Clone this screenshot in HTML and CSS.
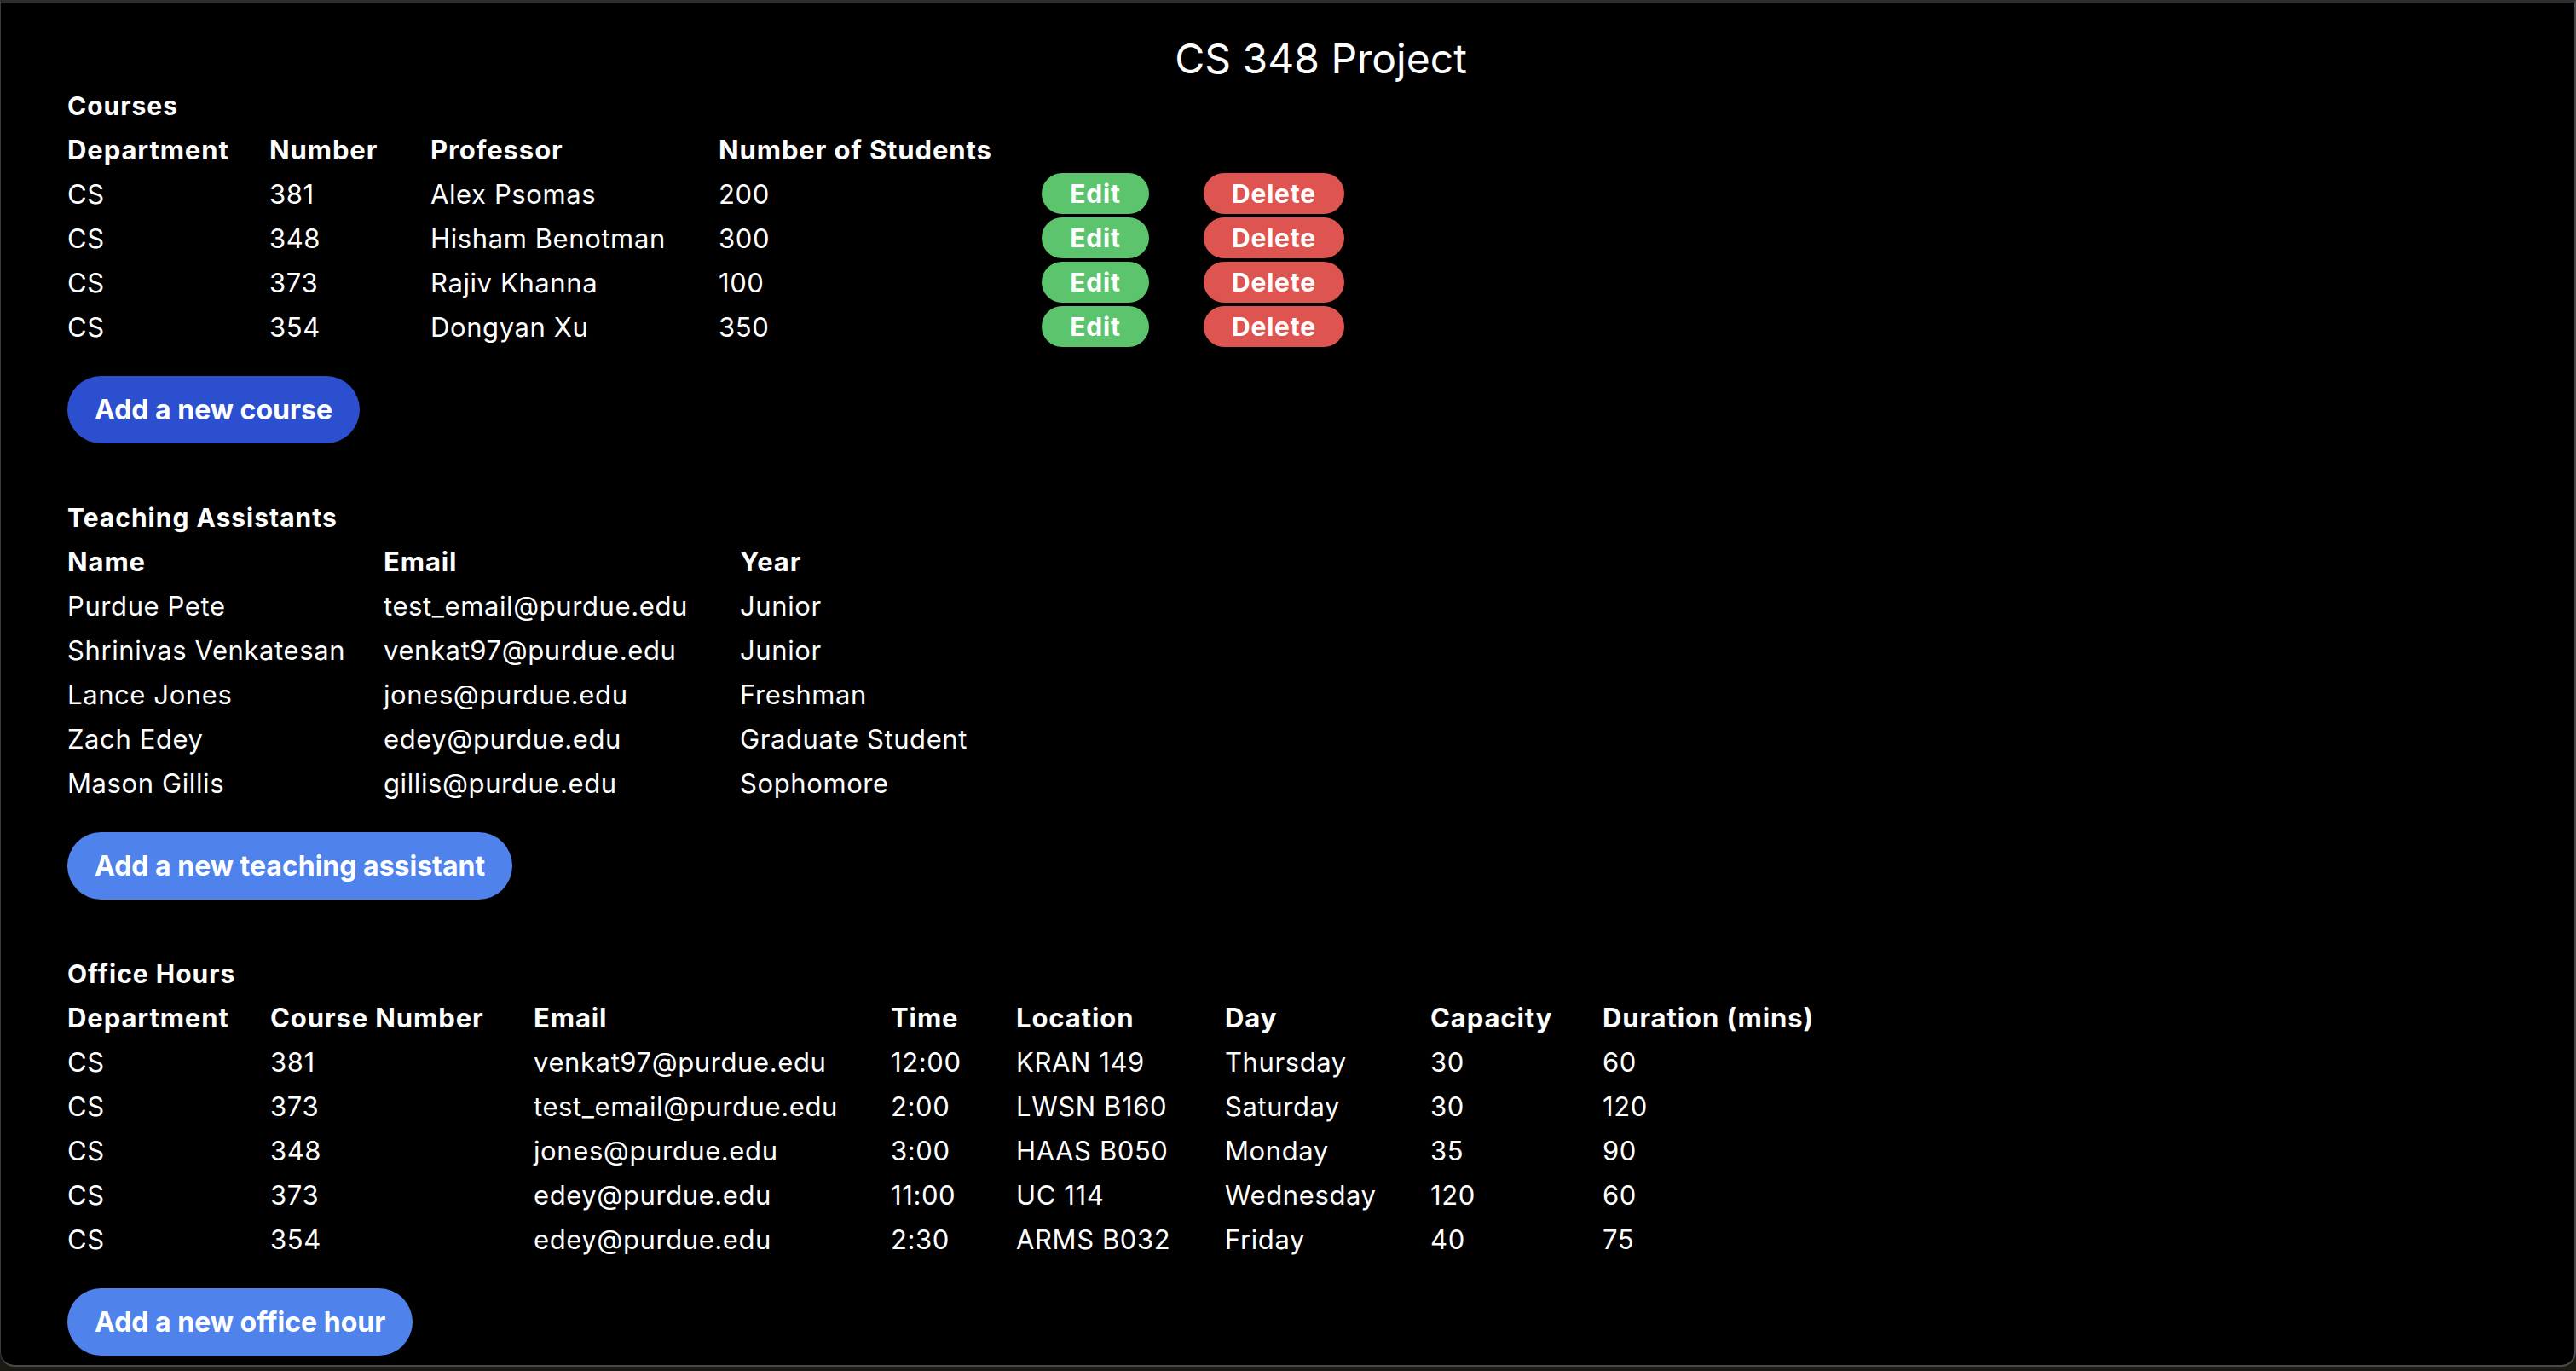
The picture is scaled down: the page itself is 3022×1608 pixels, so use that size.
FILE: index.html
```html
<!DOCTYPE html>
<html lang="en">
<head>
<meta charset="utf-8">
<title>CS 348 Project</title>
<link rel="stylesheet" href="styles.css">
</head>
<body>
<div class="window">
  <h1 class="title">CS 348 Project</h1>

  <section class="section">
    <h2 class="heading">Courses</h2>
    <div class="table">
      <div class="row courses head"><span>Department</span><span>Number</span><span>Professor</span><span>Number of Students</span></div>
      <div class="row courses"><span>CS</span><span>381</span><span>Alex Psomas</span><span>200</span><span><button class="pill edit">Edit</button></span><span><button class="pill delete">Delete</button></span></div>
      <div class="row courses"><span>CS</span><span>348</span><span>Hisham Benotman</span><span>300</span><span><button class="pill edit">Edit</button></span><span><button class="pill delete">Delete</button></span></div>
      <div class="row courses"><span>CS</span><span>373</span><span>Rajiv Khanna</span><span>100</span><span><button class="pill edit">Edit</button></span><span><button class="pill delete">Delete</button></span></div>
      <div class="row courses"><span>CS</span><span>354</span><span>Dongyan Xu</span><span>350</span><span><button class="pill edit">Edit</button></span><span><button class="pill delete">Delete</button></span></div>
    </div>
    <button class="add add-dark">Add a new course</button>
  </section>

  <section class="section">
    <h2 class="heading">Teaching Assistants</h2>
    <div class="table">
      <div class="row tas head"><span>Name</span><span>Email</span><span>Year</span></div>
      <div class="row tas"><span>Purdue Pete</span><span>test_email@purdue.edu</span><span>Junior</span></div>
      <div class="row tas"><span>Shrinivas Venkatesan</span><span>venkat97@purdue.edu</span><span>Junior</span></div>
      <div class="row tas"><span>Lance Jones</span><span>jones@purdue.edu</span><span>Freshman</span></div>
      <div class="row tas"><span>Zach Edey</span><span>edey@purdue.edu</span><span>Graduate Student</span></div>
      <div class="row tas"><span>Mason Gillis</span><span>gillis@purdue.edu</span><span>Sophomore</span></div>
    </div>
    <button class="add">Add a new teaching assistant</button>
  </section>

  <section class="section">
    <h2 class="heading">Office Hours</h2>
    <div class="table">
      <div class="row hours head"><span>Department</span><span>Course Number</span><span>Email</span><span>Time</span><span>Location</span><span>Day</span><span>Capacity</span><span>Duration (mins)</span></div>
      <div class="row hours"><span>CS</span><span>381</span><span>venkat97@purdue.edu</span><span>12:00</span><span>KRAN 149</span><span>Thursday</span><span>30</span><span>60</span></div>
      <div class="row hours"><span>CS</span><span>373</span><span>test_email@purdue.edu</span><span>2:00</span><span>LWSN B160</span><span>Saturday</span><span>30</span><span>120</span></div>
      <div class="row hours"><span>CS</span><span>348</span><span>jones@purdue.edu</span><span>3:00</span><span>HAAS B050</span><span>Monday</span><span>35</span><span>90</span></div>
      <div class="row hours"><span>CS</span><span>373</span><span>edey@purdue.edu</span><span>11:00</span><span>UC 114</span><span>Wednesday</span><span>120</span><span>60</span></div>
      <div class="row hours"><span>CS</span><span>354</span><span>edey@purdue.edu</span><span>2:30</span><span>ARMS B032</span><span>Friday</span><span>40</span><span>75</span></div>
    </div>
    <button class="add">Add a new office hour</button>
  </section>
</div>
</body>
</html>
```

FILE: styles.css
```css
* {
  box-sizing: border-box;
}

html,
body {
  margin: 0;
  padding: 0;
}

body {
  background: #1c1a12;
  color: #ffffff;
  font-family: Inter, "Noto Sans", sans-serif;
  font-size: 31px;
  letter-spacing: 0.6px;
}

.window {
  height: 1603px;
  background: #000000;
  border-top: 3px solid #2e2d33;
  border-left: 1px solid #3a3a3a;
  border-right: 2px solid #4a4a4c;
  border-bottom: 2px solid #4a4a4c;
  border-radius: 0 0 17px 17px;
  padding: 37px 0 0 78px;
  overflow: hidden;
}

.title {
  margin: 0 0 1px 0;
  font-size: 48px;
  font-weight: 400;
  line-height: 58px;
  text-align: center;
  letter-spacing: 0;
}

.section {
  margin-bottom: 62px;
}

.heading {
  margin: 0;
  font-size: 30px;
  font-weight: 700;
  line-height: 50px;
  letter-spacing: 1px;
}

.row {
  display: grid;
  height: 52px;
  align-items: center;
  white-space: nowrap;
}

.row.head {
  font-weight: 700;
  letter-spacing: 0.9px;
}

.courses {
  grid-template-columns: 237px 189px 338px 379px 190px auto;
}

.tas {
  grid-template-columns: 371px 418px auto;
}

.hours {
  grid-template-columns: 238px 309px 419px 147px 245px 241px 202px auto;
}

button {
  font-family: inherit;
  border: none;
  color: #ffffff;
  cursor: pointer;
  padding: 0;
}

.pill {
  display: block;
  height: 48px;
  border-radius: 24px;
  font-size: 30px;
  font-weight: 700;
  letter-spacing: 0.8px;
}

.edit {
  width: 126px;
  background: #5cc46d;
}

.delete {
  width: 165px;
  background: #de5450;
}

.add {
  display: block;
  margin-top: 32px;
  height: 79px;
  padding: 0 32px;
  border-radius: 40px;
  background: #4f82ea;
  font-size: 32px;
  font-weight: 700;
  letter-spacing: 0;
}

.add-dark {
  background: #2c4fcf;
}
```
